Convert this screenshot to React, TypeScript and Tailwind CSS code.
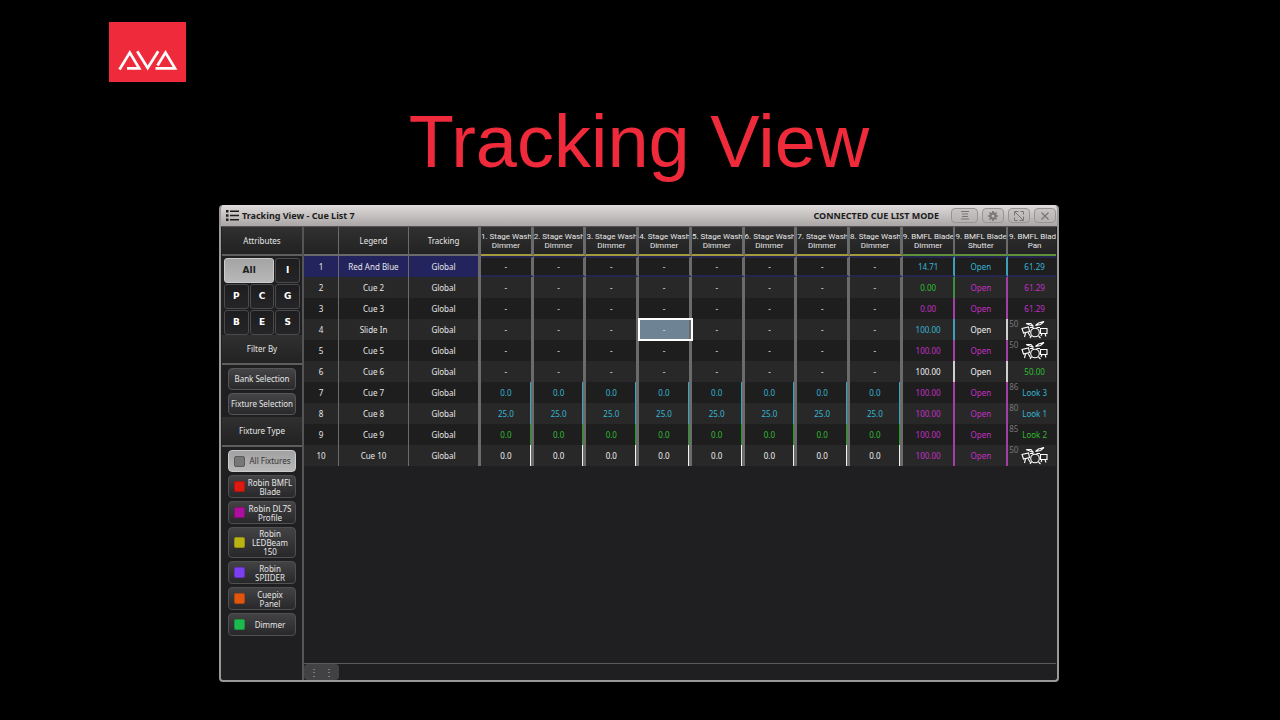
import type { ReactNode } from "react";

type Tone = "none" | "cyan" | "green" | "magenta" | "white";

const textTone: Record<Tone, string> = {
  none: "text-[#e6e6e6]",
  cyan: "text-[#35b5d2]",
  green: "text-[#2fbd2f]",
  magenta: "text-[#c32fc3]",
  white: "text-[#f2f2f2]",
};

const thinEdge: Record<Tone, string> = {
  none: "border-r-[#6b6b6b]",
  cyan: "border-r-[#3f9fb8]",
  green: "border-r-[#3f8f3f]",
  magenta: "border-r-[#a33fa3]",
  white: "border-r-[#d0d0d0]",
};

const wideMark: Record<Tone, string> = {
  none: "",
  cyan: "shadow-[inset_-1px_0_0_#35a5c0]",
  green: "shadow-[inset_-1px_0_0_#1fa01f]",
  magenta: "shadow-[inset_-1px_0_0_#c32fc3]",
  white: "shadow-[inset_-1px_0_0_#f2f2f2]",
};

type Value = { text: string; tone: Tone };
type Pan = { text?: string; tone?: Tone; mark?: string };
type Cue = {
  legend: string;
  wash: Value;
  dimmer: Value;
  shutter: Tone;
  pan: Pan;
};

const dash: Value = { text: "-", tone: "none" };

const cues: Cue[] = [
  { legend: "Red And Blue", wash: dash, dimmer: { text: "14.71", tone: "cyan" }, shutter: "cyan", pan: { text: "61.29", tone: "cyan" } },
  { legend: "Cue 2", wash: dash, dimmer: { text: "0.00", tone: "green" }, shutter: "magenta", pan: { text: "61.29", tone: "magenta" } },
  { legend: "Cue 3", wash: dash, dimmer: { text: "0.00", tone: "magenta" }, shutter: "magenta", pan: { text: "61.29", tone: "magenta" } },
  { legend: "Slide In", wash: dash, dimmer: { text: "100.00", tone: "cyan" }, shutter: "white", pan: { mark: "50" } },
  { legend: "Cue 5", wash: dash, dimmer: { text: "100.00", tone: "magenta" }, shutter: "magenta", pan: { mark: "50" } },
  { legend: "Cue 6", wash: dash, dimmer: { text: "100.00", tone: "white" }, shutter: "white", pan: { text: "50.00", tone: "green" } },
  { legend: "Cue 7", wash: { text: "0.0", tone: "cyan" }, dimmer: { text: "100.00", tone: "magenta" }, shutter: "magenta", pan: { text: "Look 3", tone: "cyan", mark: "86" } },
  { legend: "Cue 8", wash: { text: "25.0", tone: "cyan" }, dimmer: { text: "100.00", tone: "magenta" }, shutter: "magenta", pan: { text: "Look 1", tone: "cyan", mark: "80" } },
  { legend: "Cue 9", wash: { text: "0.0", tone: "green" }, dimmer: { text: "100.00", tone: "magenta" }, shutter: "magenta", pan: { text: "Look 2", tone: "green", mark: "85" } },
  { legend: "Cue 10", wash: { text: "0.0", tone: "white" }, dimmer: { text: "100.00", tone: "magenta" }, shutter: "magenta", pan: { mark: "50" } },
];

const washes = [1, 2, 3, 4, 5, 6, 7, 8];

const fixtures = [
  { name: "Robin BMFL Blade", color: "bg-[#dc1a10]" },
  { name: "Robin DL7S Profile", color: "bg-[#ab0f9c]" },
  { name: "Robin LEDBeam 150", color: "bg-[#b9b414]" },
  { name: "Robin SPIIDER", color: "bg-[#7c3ff0]" },
  { name: "Cuepix Panel", color: "bg-[#e0560e]" },
  { name: "Dimmer", color: "bg-[#1dba50]" },
];

function Logo() {
  return (
    <svg viewBox="0 0 77 60" className="h-[60px] w-[77px]" role="img" aria-label="AVA">
      <rect width="77" height="60" fill="#ee2a3b" />
      <g fill="none" stroke="#fff" strokeWidth="2.7">
        <path d="M10.500 47.500L20.800 30.500L30.200 46.300H18" />
        <path d="M28.200 29.200L38.700 46L49.200 29.200" />
        <path d="M46.500 46.300H66L56.500 30.500L48.500 43.500" />
      </g>
    </svg>
  );
}

function DrumKit() {
  return (
    <svg viewBox="0 0 27 19" className="h-[19px] w-[27px]" fill="none" stroke="#fff" strokeWidth="1.1" aria-hidden="true">
      <path d="M5 3.500L12.500 6.500M6 3.500H10L12.500 6.500" />
      <path d="M14.500 5.500L17.500 3L23 1.500M14.500 5.500L19.500 4.500L23 1.500" />
      <path d="M1 8.500L7.500 7L8.500 11.500L2.500 13Z" />
      <path d="M19.500 8.500H26V13.500H19.500Z" />
      <circle cx="14" cy="12.500" r="4.300" />
      <path d="M9 7.500H12.500M15.500 7.500H19M4.500 13L3.500 17M7 12.500L9.500 16.500M10.500 16L9 18M17.500 16L19.500 18M24 13.500L25 16.500M21 13.500L20 16" />
    </svg>
  );
}

function SideHeading({ children, className }: { children: ReactNode; className: string }) {
  return (
    <h2 className={`flex items-center justify-center border-b-2 border-[#5e5e5e] bg-linear-to-b from-[#303030] to-[#222223] text-[8px] ${className}`}>
      {children}
    </h2>
  );
}

function AttrKey({ children }: { children: string }) {
  return (
    <button className="h-[25px] rounded-[3px] border border-[#4a4a4a] bg-linear-to-b from-[#1d1d1f] to-[#252527] font-['DejaVu_Sans',sans-serif] text-[9px] font-bold text-white">
      {children}
    </button>
  );
}

function FilterKey({ children }: { children: string }) {
  return (
    <button className="h-[22px] rounded-[4px] border border-[#555] bg-linear-to-b from-[#454547] to-[#29292b] text-[8px] whitespace-nowrap">
      {children}
    </button>
  );
}

function BarKey({ label, wide, children }: { label: string; wide?: boolean; children: ReactNode }) {
  return (
    <button
      aria-label={label}
      className={`flex h-[15px] items-center justify-center rounded-[4px] border border-[#979494] bg-linear-to-b from-[#c9c5c5] to-[#b5b1b1] text-[#777] ${wide ? "w-[27px]" : "w-[22px]"}`}
    >
      {children}
    </button>
  );
}

function TitleBar() {
  return (
    <header className="flex h-[21px] shrink-0 items-center bg-linear-to-b from-[#e0dcdc] to-[#aaa6a6] pr-px pl-[5px] text-[#1c1c1c]">
      <svg viewBox="0 0 13 11" className="h-[11px] w-[13px]" fill="currentColor" aria-hidden="true">
        <path d="M0 0H2.500V2.500H0ZM0 4.200H2.500V6.700H0ZM0 8.400H2.500V10.900H0ZM4 .5H13V2H4ZM4 4.700H13V6.200H4ZM4 8.900H13V10.400H4Z" />
      </svg>
      <h2 className="ml-[3px] text-[9px] font-bold">Tracking View - Cue List 7</h2>
      <p className="mr-[12px] ml-auto text-[9px] font-bold">CONNECTED CUE LIST MODE</p>
      <div className="flex gap-[4px]">
        <BarKey label="List" wide>
          <svg viewBox="0 0 8 9" className="h-[9px] w-[8px]" stroke="currentColor" strokeWidth="1">
            <path d="M0 .5H8M1 3H7M1 5.500H7M0 8H8" />
          </svg>
        </BarKey>
        <BarKey label="Settings">
          <svg viewBox="0 0 10 10" className="h-[10px] w-[10px]" fill="none" stroke="currentColor">
            <circle cx="5" cy="5" r="2.500" strokeWidth="2" />
            <path d="M5 0V2M5 8V10M0 5H2M8 5H10M1.500 1.500L3 3M7 7L8.500 8.500M8.500 1.500L7 3M3 7L1.500 8.500" strokeWidth="1.700" />
          </svg>
        </BarKey>
        <BarKey label="Resize">
          <svg viewBox="0 0 10 10" className="h-[10px] w-[10px]" fill="none" stroke="currentColor" strokeWidth="1">
            <path d="M.5 4.500V.5H4.500M1 1L9 9M5.500 9.500H9.500V5.500M6.500 .5H9.500V3.500M.5 6.500V9.500H3.500" />
          </svg>
        </BarKey>
        <BarKey label="Close">
          <svg viewBox="0 0 8 8" className="h-[8px] w-[8px]" stroke="currentColor" strokeWidth="1.300">
            <path d="M.5 .5L7.500 7.500M7.500 .5L.5 7.500" />
          </svg>
        </BarKey>
      </div>
    </header>
  );
}

function Sidebar() {
  return (
    <aside className="flex w-[83px] shrink-0 flex-col border-r-2 border-[#555] pl-px">
      <SideHeading className="h-[29px]">Attributes</SideHeading>
      <div className="grid grid-cols-3 gap-px px-[2px] pt-[2px]">
        <button className="col-span-2 rounded-[3px] border border-[#ccc] bg-linear-to-b from-[#a4a4a4] to-[#b8b8b8] font-['DejaVu_Sans',sans-serif] text-[9px] font-bold text-[#222]">
          All
        </button>
        {["I", "P", "C", "G", "B", "E", "S"].map((key) => (
          <AttrKey key={key}>{key}</AttrKey>
        ))}
      </div>
      <SideHeading className="h-[30px]">Filter By</SideHeading>
      <div className="flex flex-col gap-[3px] px-[6px] pt-[3px] pb-[2px]">
        <FilterKey>Bank Selection</FilterKey>
        <FilterKey>Fixture Selection</FilterKey>
      </div>
      <SideHeading className="h-[30px]">Fixture Type</SideHeading>
      <div className="flex flex-col gap-[3px] px-[6px] pt-[3px]">
        <button className="flex h-[22px] items-center rounded-[4px] border border-[#ccc] bg-linear-to-b from-[#a2a2a2] to-[#b8b8b8] pl-[5px] text-[8px] text-[#333]">
          <span className="size-[11px] shrink-0 rounded-[2px] border border-[#5a5a5a] bg-[#777]" />
          <span className="flex-1 text-center whitespace-nowrap">All Fixtures</span>
        </button>
        {fixtures.map((fixture) => (
          <button
            key={fixture.name}
            className="flex min-h-[23px] items-center rounded-[4px] border border-[#505050] bg-linear-to-b from-[#434345] to-[#28282a] py-px pl-[5px] text-[8px] leading-[9px]"
          >
            <span className={`size-[11px] shrink-0 rounded-[2px] border border-black/20 ${fixture.color}`} />
            <span className="flex-1 px-px text-center">{fixture.name}</span>
          </button>
        ))}
      </div>
    </aside>
  );
}

const headCell = "h-[29px] overflow-hidden border-[#6b6b6b] p-0 font-normal whitespace-nowrap";
const cell = "h-[21px] p-0";

function CueTable() {
  return (
    <table className="w-[757px] min-w-full table-fixed border-separate border-spacing-0 text-center text-[8px] leading-[9px]">
      <colgroup>
        <col className="w-[35px]" />
        <col className="w-[70px]" />
        <col className="w-[72px]" />
      </colgroup>
      <thead className="bg-linear-to-b from-[#303030] to-[#222223]">
        <tr>
          <th className={`${headCell} border-r border-b-2`} aria-label="Number" />
          <th className={`${headCell} border-r border-b-2`}>Legend</th>
          <th className={`${headCell} border-r-3 border-b-2`}>Tracking</th>
          {washes.map((n) => (
            <th key={n} className={`${headCell} border-r-3 border-b-2 border-b-[#a29a3c] font-['Roboto',sans-serif]`}>
              {n}. Stage Wash
              <br />
              Dimmer
            </th>
          ))}
          {["Dimmer", "Shutter", "Pan"].map((name) => (
            <th key={name} className={`${headCell} border-b-2 border-b-[#5f9238] font-['Roboto',sans-serif] ${name === "Pan" ? "" : "border-r-2"}`}>
              9. BMFL Blade
              <br />
              {name}
            </th>
          ))}
        </tr>
      </thead>
      <tbody>
        {cues.map((cue, row) => {
          const current = row === 0;
          const lead = current ? "bg-[#23245e]" : "";
          const rule = current ? "border-y-2 border-y-[#25264f]" : "";
          return (
            <tr key={cue.legend} className={row % 2 ? "bg-[#282829]" : "bg-[#1e1e1f]"}>
              <td className={`${cell} ${lead} border-r border-r-[#6b6b6b]`}>{row + 1}</td>
              <td className={`${cell} ${lead} border-r border-r-[#6b6b6b]`}>{cue.legend}</td>
              <td className={`${cell} ${lead} border-r-3 border-r-[#6b6b6b]`}>Global</td>
              {washes.map((n) => {
                const selected = row === 3 && n === 4;
                return (
                  <td
                    key={n}
                    className={`${cell} ${rule} border-r-3 border-r-[#6b6b6b] ${textTone[cue.wash.tone]} ${wideMark[cue.wash.tone]} ${selected ? "bg-[#6e8393] outline-2 -outline-offset-1 outline-white" : ""}`}
                  >
                    {cue.wash.text}
                  </td>
                );
              })}
              <td className={`${cell} ${rule} border-r-2 ${thinEdge[cue.dimmer.tone]} ${textTone[cue.dimmer.tone]}`}>{cue.dimmer.text}</td>
              <td className={`${cell} ${rule} border-r-2 ${thinEdge[cue.shutter]} ${textTone[cue.shutter]}`}>Open</td>
              <td className={`${cell} ${rule} relative ${textTone[cue.pan.tone ?? "none"]}`}>
                {cue.pan.mark && <span className="absolute top-0 left-px text-[#777]">{cue.pan.mark}</span>}
                <span className="flex justify-center">{cue.pan.text ?? <DrumKit />}</span>
              </td>
            </tr>
          );
        })}
      </tbody>
    </table>
  );
}

export default function App() {
  return (
    <main className="min-h-screen bg-black pt-[22px] pr-[111px] pb-[38px] pl-[109px] font-['Noto_Sans',sans-serif] text-[#e6e6e6]">
      <Logo />
      <h1 className="mt-[17px] text-center font-['Liberation_Sans',sans-serif] text-[74px] leading-[86px] text-[#ee2a3b]">Tracking View</h1>
      <section className="mx-auto mt-[20px] flex h-[477px] w-[840px] flex-col overflow-hidden rounded-[4px] border-2 border-t-0 border-[#9a9898] bg-[#1f1f21]">
        <TitleBar />
        <div className="flex min-h-0 flex-1 border-t border-[#555]">
          <Sidebar />
          <div className="mr-px flex min-w-0 flex-1 flex-col">
            <div className="flex-1 overflow-hidden">
              <CueTable />
            </div>
            <div className="flex h-[17px] border-t border-[#5a5a5a]">
              <div className="flex w-[35px] items-center justify-evenly rounded-[4px] bg-[#424244] text-[10px] text-[#aaa]">
                <span>⋮</span>
                <span>⋮</span>
              </div>
            </div>
          </div>
        </div>
      </section>
    </main>
  );
}
